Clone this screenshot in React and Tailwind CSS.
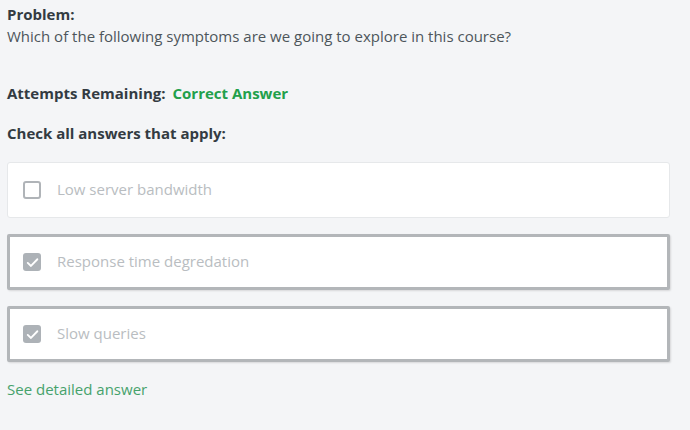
import React from "react";

function Check({ checked }) {
  if (checked) {
    return (
      <div className="w-[18px] h-[18px] rounded-[3px] bg-[#adb2b7] flex items-center justify-center shrink-0">
        <svg width="13" height="13" viewBox="0 0 12 12" fill="none">
          <path d="M1.6 6.4 L4.6 9.2 L10.5 3" stroke="white" strokeWidth="1.7" strokeLinecap="round" strokeLinejoin="round" />
        </svg>
      </div>
    );
  }
  return <div className="w-[18px] h-[18px] rounded-[3px] border-2 border-[#b0b4b8] bg-white shrink-0" />;
}

function Option({ label, checked }) {
  return (
    <div
      className={
        checked
          ? "h-[56px] bg-white border-[3px] border-[#b3b6b9] rounded-[2px] shadow-[1px_1px_2px_rgba(0,0,0,0.12)] flex items-center pl-[13px]"
          : "h-[56px] bg-white border border-[#e6e8ea] rounded-[3px] flex items-center pl-[15px]"
      }
    >
      <Check checked={checked} />
      <span className="ml-[16px] text-[15px] text-[#b9bdc1] -mt-[2px]">
        {label}
      </span>
    </div>
  );
}

export default function App() {
  return (
    <div
      className="w-[690px] h-[430px] bg-[#f4f5f7] px-[7px] pt-[4px] text-[#333b42]"
      style={{ fontFamily: '"Open Sans", "Liberation Sans", sans-serif' }}
    >
      <div className="text-[15px] font-bold leading-[20px]">Problem:</div>
      <div className="text-[15px] leading-[22px] mt-[1px] text-[#4d555b]">
        Which of the following symptoms are we going to explore in this course?
      </div>
      <div className="mt-[36px] text-[15px] font-bold leading-[20px] flex gap-[7px]">
        <span>Attempts Remaining:</span>
        <span className="text-[#22a04b]">Correct Answer</span>
      </div>
      <div className="mt-[20px] text-[15px] font-bold leading-[20px]">Check all answers that apply:</div>
      <div className="mt-[19px] w-[663px] flex flex-col gap-[16px]">
        <Option label="Low server bandwidth" checked={false} />
        <Option label="Response time degredation" checked />
        <Option label="Slow queries" checked />
      </div>
      <div className="mt-[16px] text-[15px] leading-[22px] text-[#46a26c]">See detailed answer</div>
    </div>
  );
}
